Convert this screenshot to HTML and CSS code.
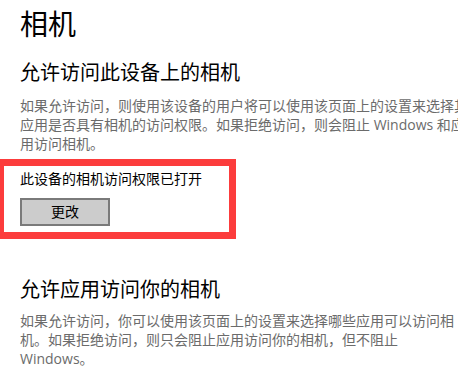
FILE: index.html
```html
<!DOCTYPE html>
<html lang="zh-CN">
<head>
<meta charset="utf-8">
<title>相机</title>
<link rel="stylesheet" href="styles.css">
</head>
<body>
<main class="page">
  <h1 class="page-title">相机</h1>
  <h2 class="section-title">允许访问此设备上的相机</h2>
  <p class="desc">如果允许访问，则使用该设备的用户将可以使用该页面上的设置来选择其应用是否具有相机的访问权限。如果拒绝访问，则会阻止 Windows 和应用访问相机。</p>
  <div class="highlight">
    <div class="status">此设备的相机访问权限已打开</div>
    <button class="change-btn" type="button">更改</button>
  </div>
  <h2 class="section-title section-title-2">允许应用访问你的相机</h2>
  <p class="desc desc-2">如果允许访问，你可以使用该页面上的设置来选择哪些应用可以访问相机。如果拒绝访问，则只会阻止应用访问你的相机，但不阻止 Windows。</p>
</main>
</body>
</html>
```

FILE: styles.css
```css
html, body {
  margin: 0;
  padding: 0;
  overflow: hidden;
  background: #ffffff;
}

body {
  font-family: "Open Sans", "Noto Sans CJK SC", sans-serif;
  color: #000;
}

.page {
  padding-left: 20px;
  width: 452px;
}

.page-title {
  margin: 6px 0 0;
  font-size: 28px;
  line-height: 36px;
  font-weight: 400;
  color: #000;
}

.section-title {
  margin: 17px 0 0;
  font-size: 20px;
  line-height: 28px;
  font-weight: 400;
  color: #000;
}

.desc {
  margin: 9px 0 0;
  font-size: 14px;
  line-height: 19px;
  color: #6b6b6b;
}

.highlight {
  box-sizing: border-box;
  width: 239px;
  margin: 6px 0 0 -23px;
  border: 7px solid #fc3c3c;
  padding: 3px 0 6px 16px;
}

.status {
  font-size: 14px;
  line-height: 20px;
  color: #000;
}

.change-btn {
  display: block;
  box-sizing: border-box;
  width: 90px;
  height: 28px;
  margin-top: 9px;
  padding: 0;
  border: 2px solid #7a7a7a;
  background: #cccccc;
  font-family: "Open Sans", "Noto Sans CJK SC", sans-serif;
  font-size: 14px;
  line-height: 24px;
  color: #000;
  text-align: center;
}

.section-title-2 {
  margin-top: 37px;
}

.desc-2 {
  margin-top: 7px;
}
```
